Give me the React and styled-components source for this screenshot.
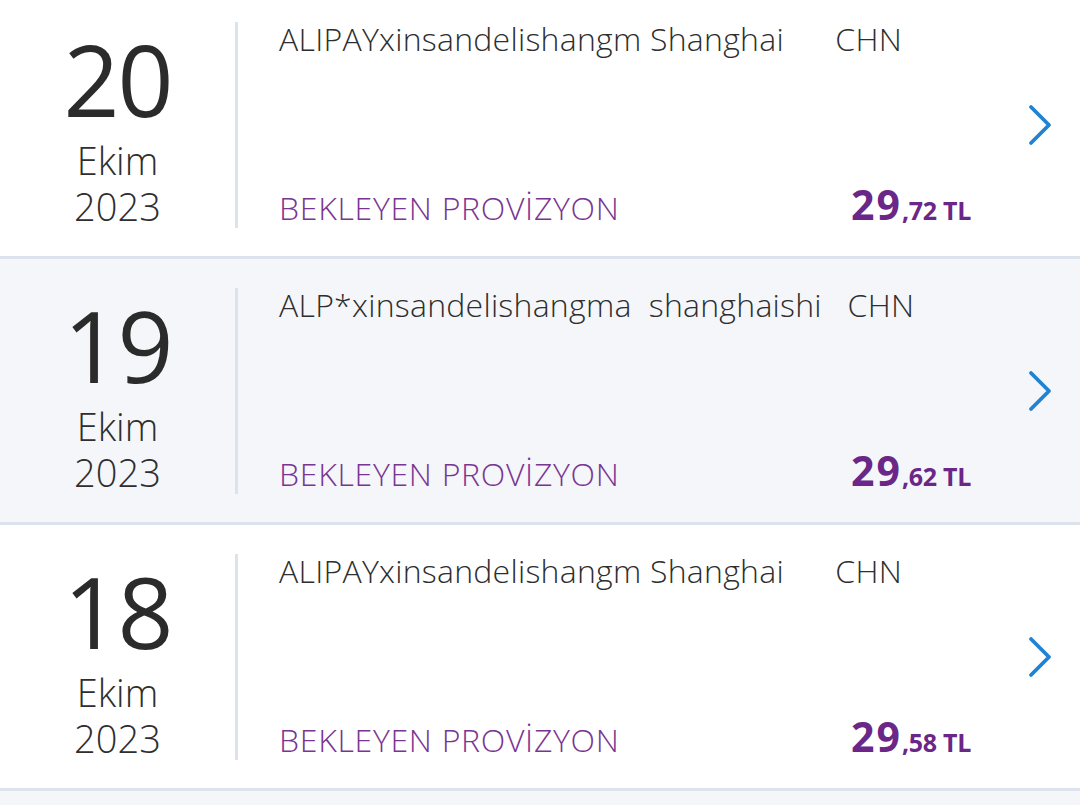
import React from 'react';
import styled, { createGlobalStyle } from 'styled-components';

const GlobalStyle = createGlobalStyle`
  html, body {
    margin: 0;
    padding: 0;
    background: #f4f6fa;
    font-family: "Open Sans", "Noto Sans", sans-serif;
  }
`;

const List = styled.div`
  margin-top: -7px;
  width: 1080px;
  overflow: hidden;
`;

const Row = styled.div`
  display: flex;
  height: 263px;
  border-bottom: 3px solid #dde3ec;
  background: ${(p) => (p.$alt ? '#f4f6fa' : '#ffffff')};
`;

const DateCol = styled.div`
  width: 235px;
  flex-shrink: 0;
  display: flex;
  flex-direction: column;
  align-items: center;
  padding-top: 34px;
  color: #2b2b2b;
`;

const Day = styled.div`
  font-size: 98px;
  line-height: 104px;
  font-weight: 400;
  letter-spacing: -2px;
  margin-bottom: 6px;
`;

const Month = styled.div`
  font-size: 38px;
  line-height: 46px;
  font-weight: 300;
  color: #2e2e2e;
`;

const Body = styled.div`
  flex: 1;
  margin: 29px 0 28px;
  border-left: 3px solid #dde3ec;
  padding-left: 41px;
  display: flex;
  flex-direction: column;
  justify-content: space-between;
`;

const Merchant = styled.div`
  font-size: 32px;
  line-height: 40px;
  margin-top: -3px;
  font-weight: 300;
  color: #2e2e2e;
  white-space: pre;
  letter-spacing: 0.25px;
`;

const Footer = styled.div`
  display: flex;
  justify-content: space-between;
  align-items: baseline;
`;

const Status = styled.div`
  font-size: 32px;
  line-height: 40px;
  font-weight: 300;
  color: #7a3592;
  letter-spacing: 0.7px;
  margin-bottom: -4px;
`;

const Amount = styled.div`
  color: #6b2787;
  font-weight: 700;
  font-size: 25px;
  letter-spacing: -0.3px;
  margin-bottom: -4px;
  b {
    font-size: 41px;
    font-weight: 700;
    letter-spacing: 2px;
  }
`;

const Arrow = styled.div`
  width: 109px;
  flex-shrink: 0;
  display: flex;
  align-items: center;
  justify-content: center;
  padding-left: 30px;
  box-sizing: border-box;
`;

const Chevron = () => (
  <svg width="30" height="44" viewBox="0 0 30 44" fill="none">
    <path d="M5 4 L23 22 L5 40" stroke="#1f82d2" strokeWidth="3.8" strokeLinecap="round" strokeLinejoin="round" />
  </svg>
);

const items = [
  { day: '20', merchant: 'ALIPAYxinsandelishangm Shanghai      CHN', whole: '29', dec: ',72' },
  { day: '19', merchant: 'ALP*xinsandelishangma  shanghaishi   CHN', whole: '29', dec: ',62' },
  { day: '18', merchant: 'ALIPAYxinsandelishangm Shanghai      CHN', whole: '29', dec: ',58' },
];

export default function App() {
  return (
    <>
      <GlobalStyle />
      <List>
        {items.map((it, i) => (
          <Row key={it.day} $alt={i % 2 === 1}>
            <DateCol>
              <Day>{it.day}</Day>
              <Month>Ekim</Month>
              <Month>2023</Month>
            </DateCol>
            <Body>
              <Merchant>{it.merchant}</Merchant>
              <Footer>
                <Status>BEKLEYEN PROVİZYON</Status>
                <Amount>
                  <b>{it.whole}</b>{it.dec} TL
                </Amount>
              </Footer>
            </Body>
            <Arrow>
              <Chevron />
            </Arrow>
          </Row>
        ))}
      </List>
    </>
  );
}
